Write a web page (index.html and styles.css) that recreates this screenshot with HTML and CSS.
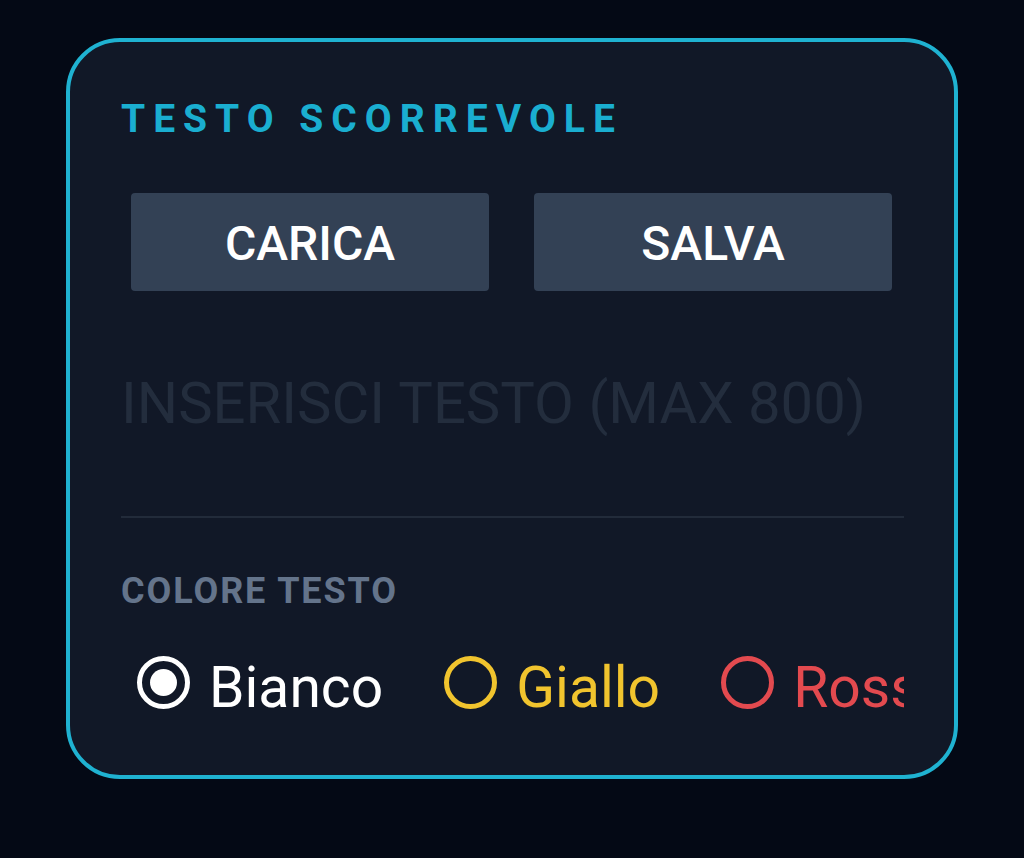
FILE: index.html
```html
<!DOCTYPE html>
<html lang="it">
<head>
<meta charset="utf-8">
<title>Testo scorrevole</title>
<link rel="stylesheet" href="styles.css">
</head>
<body>
<div class="card">
  <h2 class="title">TESTO SCORREVOLE</h2>
  <div class="actions">
    <button class="btn">CARICA</button>
    <button class="btn">SALVA</button>
  </div>
  <div class="field">
    <div class="placeholder">INSERISCI TESTO (MAX 800)</div>
  </div>
  <div class="divider"></div>
  <div class="label">COLORE TESTO</div>
  <div class="radios">
    <div class="radio-item white"><span class="radio checked"></span><span class="radio-text">Bianco</span></div>
    <div class="radio-item yellow"><span class="radio"></span><span class="radio-text">Giallo</span></div>
    <div class="radio-item red"><span class="radio"></span><span class="radio-text">Rosso</span></div>
  </div>
</div>
</body>
</html>
```
FILE: styles.css
```css
html, body {
  margin: 0;
  padding: 0;
}
body {
  background: #040915;
  font-family: Roboto, "Noto Sans", sans-serif;
  width: 1024px;
  height: 858px;
  overflow: hidden;
  padding-top: 38px;
  box-sizing: border-box;
}
.card {
  margin-left: 66px;
  width: 892px;
  height: 741px;
  box-sizing: border-box;
  border: 4px solid #1fb2d1;
  border-radius: 54px;
  background: #111827;
  padding: 58px 50px 0 51px;
}
.title {
  margin: 0;
  font-size: 39px;
  line-height: 39px;
  font-weight: 700;
  letter-spacing: 8px;
  color: #1aaed0;
}
.actions {
  display: flex;
  gap: 45px;
  padding: 0 12px 0 10px;
  margin-top: 54px;
}
.btn {
  flex: 1;
  height: 98px;
  box-sizing: border-box;
  padding: 4px 0 0 0;
  border: none;
  border-radius: 4px;
  background: #334155;
  color: #ffffff;
  font-family: Roboto, "Noto Sans", sans-serif;
  font-size: 48px;
  line-height: 48px;
  font-weight: 500;
  display: flex;
  align-items: center;
  justify-content: center;
}
.field {
  padding-top: 78px;
  padding-bottom: 79px;
}
.placeholder {
  font-size: 58px;
  line-height: 68px;
  font-weight: 400;
  color: #232d3d;
  white-space: nowrap;
}
.divider {
  height: 2px;
  background: #222b3a;
}
.label {
  margin-top: 55px;
  font-size: 36px;
  line-height: 36px;
  font-weight: 700;
  color: #64748b;
  letter-spacing: 1.9px;
}
.radios {
  display: flex;
  align-items: flex-start;
  gap: 61px;
  margin-top: 43px;
  padding-left: 16px;
  overflow: hidden;
  white-space: nowrap;
}
.radio-item {
  display: flex;
  align-items: flex-start;
  flex-shrink: 0;
}
.radio {
  width: 53px;
  height: 53px;
  margin-top: 4px;
  box-sizing: border-box;
  border: 5px solid currentColor;
  border-radius: 50%;
  display: flex;
  align-items: center;
  justify-content: center;
  flex-shrink: 0;
}
.radio.checked::after {
  content: "";
  width: 27px;
  height: 27px;
  border-radius: 50%;
  background: currentColor;
}
.radio-text {
  margin-left: 19px;
  margin-top: 2px;
  font-size: 57px;
  line-height: 67px;
  font-weight: 400;
}
.white { color: #ffffff; }
.yellow { color: #f1c42e; }
.red { color: #e34a4f; }
```
